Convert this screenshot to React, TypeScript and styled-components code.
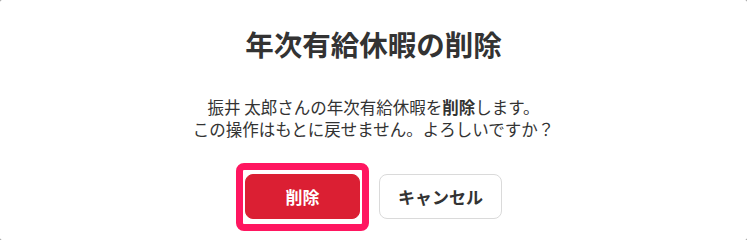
import React from 'react'
import styled, { createGlobalStyle } from 'styled-components'

const GlobalStyle = createGlobalStyle`
  html, body {
    margin: 0;
    padding: 0;
    background: #8a8a8a;
  }
  body {
    font-family: 'Noto Sans CJK JP', 'Noto Sans', sans-serif;
    color: #333;
  }
`

const Dialog = styled.section`
  width: 747px;
  height: 240px;
  box-sizing: border-box;
  background: #fff;
  border-radius: 2px;
  padding-top: 24px;
  display: flex;
  flex-direction: column;
  align-items: center;
`

const Title = styled.h2`
  margin: 0 0 32px;
  font-size: 28.5px;
  line-height: 40px;
  font-weight: 700;
  color: #333;
`

const Message = styled.p`
  margin: 0 0 34px;
  font-size: 16.5px;
  line-height: 22px;
  text-align: center;
  color: #333;

  strong {
    font-weight: 700;
  }
`

const Actions = styled.div`
  display: flex;
  gap: 19px;
  align-items: center;
`

const Marked = styled.div`
  position: relative;
  display: flex;
`

// annotation frame drawn over the delete button
const Highlight = styled.span`
  position: absolute;
  top: -11px;
  bottom: -12px;
  left: -9px;
  right: -9px;
  border: 7px solid #ff1660;
  border-radius: 8px;
  pointer-events: none;
`

const Button = styled.button<{ $danger?: boolean; $width: number }>`
  width: ${p => p.$width}px;
  height: 45px;
  border-radius: 8px;
  font-family: inherit;
  font-size: 17px;
  font-weight: 700;
  cursor: pointer;
  background: ${p => (p.$danger ? '#db1f33' : '#fff')};
  color: ${p => (p.$danger ? '#fff' : '#333')};
  border: 1px solid ${p => (p.$danger ? '#db1f33' : '#dadada')};
`

function App() {
  return (
    <>
      <GlobalStyle />
      <Dialog>
        <Title>年次有給休暇の削除</Title>
        <Message>
          振井 太郎さんの年次有給休暇を<strong>削除</strong>します。
          <br />
          この操作はもとに戻せません。よろしいですか？
        </Message>
        <Actions>
          <Marked>
            <Button $danger $width={115}>削除</Button>
            <Highlight />
          </Marked>
          <Button $width={123}>キャンセル</Button>
        </Actions>
      </Dialog>
    </>
  )
}

export default App
